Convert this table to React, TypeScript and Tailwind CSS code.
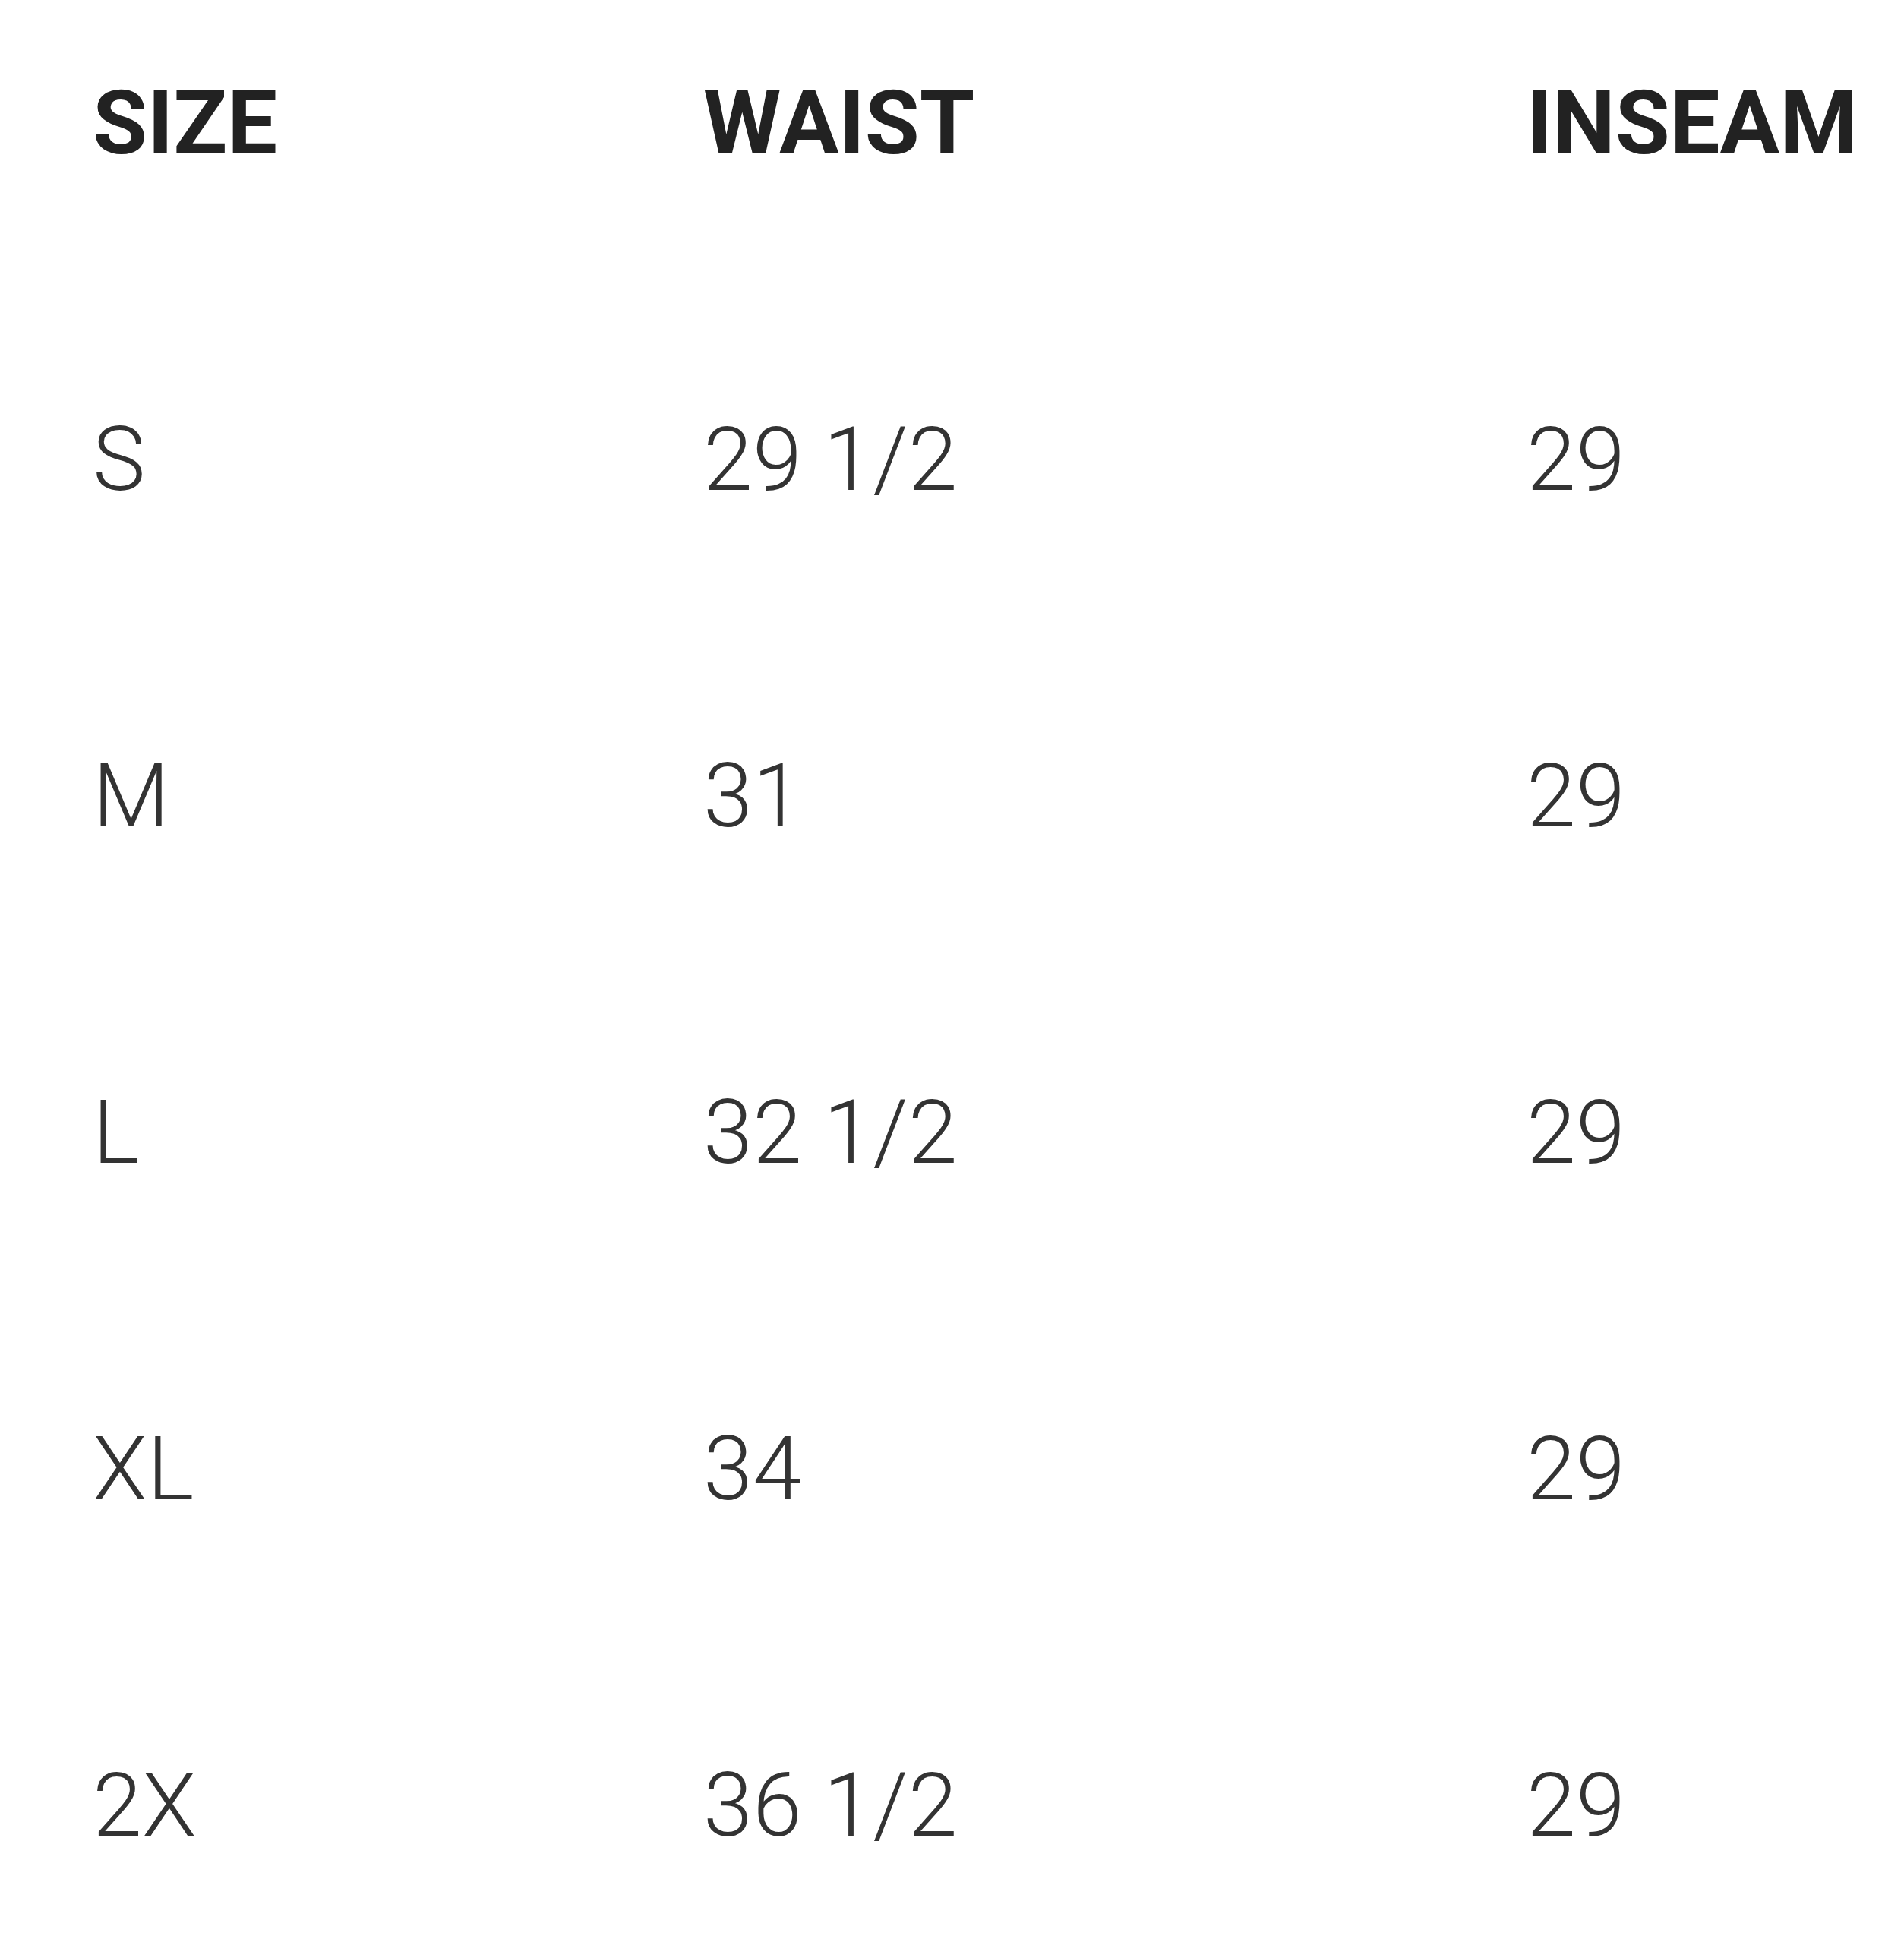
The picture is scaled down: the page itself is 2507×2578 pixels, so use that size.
import React from 'react';

const rows = [
  { size: 'S', waist: '29 1/2', inseam: '29' },
  { size: 'M', waist: '31', inseam: '29' },
  { size: 'L', waist: '32 1/2', inseam: '29' },
  { size: 'XL', waist: '34', inseam: '29' },
  { size: '2X', waist: '36 1/2', inseam: '29' },
];

const App: React.FC = () => {
  return (
    <div
      className="w-[2507px] h-[2578px] bg-white pt-[104px] pl-[122px] flex flex-col gap-[326px] overflow-hidden"
      style={{ fontFamily: 'Roboto, sans-serif' }}
    >
      {/* Header */}
      <div className="grid grid-cols-[804px_1084px_1fr] text-[117px] leading-none font-bold text-[#222222]">
        <div>SIZE</div>
        <div>WAIST</div>
        <div>INSEAM</div>
      </div>

      {rows.map((r) => (
        <div
          key={r.size}
          className="grid grid-cols-[804px_1084px_1fr] text-[117px] leading-none font-light text-[#333333]"
        >
          <div>{r.size}</div>
          <div>{r.waist}</div>
          <div>{r.inseam}</div>
        </div>
      ))}
    </div>
  );
};

export default App;
